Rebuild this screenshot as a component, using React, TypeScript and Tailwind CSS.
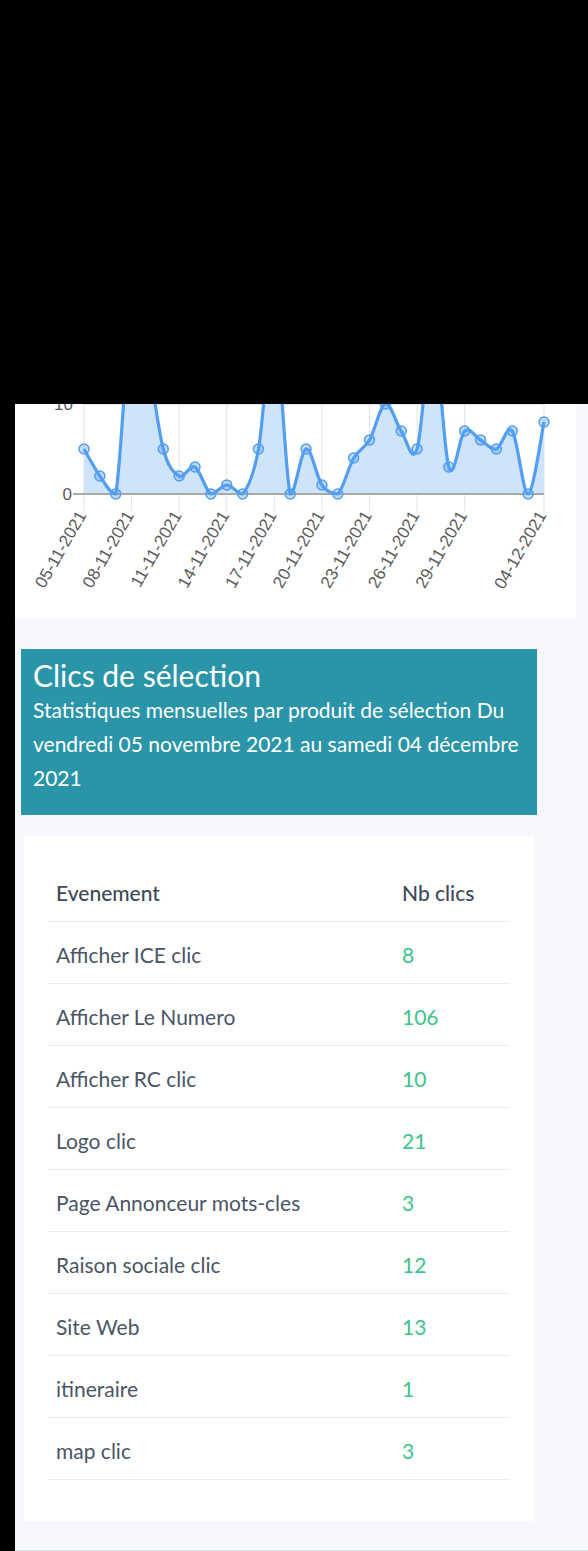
import React from "react";

// clicks per day, 05-11-2021 -> 04-12-2021
const chartData = [
  5, 2, 0, 20, 15, 5, 2, 3, 0, 1, 0, 5, 19, 0, 5, 1, 0, 4, 6, 10, 7, 5, 18, 3,
  7, 6, 5, 7, 0, 8,
];

const ticks = [
  { day: 0, label: "05-11-2021" },
  { day: 3, label: "08-11-2021" },
  { day: 6, label: "11-11-2021" },
  { day: 9, label: "14-11-2021" },
  { day: 12, label: "17-11-2021" },
  { day: 15, label: "20-11-2021" },
  { day: 18, label: "23-11-2021" },
  { day: 21, label: "26-11-2021" },
  { day: 24, label: "29-11-2021" },
  { day: 29, label: "04-12-2021" },
];

const events = [
  { name: "Afficher ICE clic", clicks: 8 },
  { name: "Afficher Le Numero", clicks: 106 },
  { name: "Afficher RC clic", clicks: 10 },
  { name: "Logo clic", clicks: 21 },
  { name: "Page Annonceur mots-cles", clicks: 3 },
  { name: "Raison sociale clic", clicks: 12 },
  { name: "Site Web", clicks: 13 },
  { name: "itineraire", clicks: 1 },
  { name: "map clic", clicks: 3 },
];

const X0 = 69;
const X1 = 529;
const BASE = 90;
const UNIT = 9;

const px = (i: number) => X0 + (i * (X1 - X0)) / (chartData.length - 1);
const py = (v: number) => BASE - v * UNIT;

function smoothPath(pts: [number, number][]) {
  let d = `M${pts[0][0]},${pts[0][1]}`;
  for (let i = 0; i < pts.length - 1; i++) {
    const p0 = pts[i - 1] ?? pts[i];
    const p1 = pts[i];
    const p2 = pts[i + 1];
    const p3 = pts[i + 2] ?? p2;
    const c1x = p1[0] + (p2[0] - p0[0]) / 6;
    // keep the curve from dipping under the zero line
    const c1y = Math.min(BASE, p1[1] + (p2[1] - p0[1]) / 6);
    const c2x = p2[0] - (p3[0] - p1[0]) / 6;
    const c2y = Math.min(BASE, p2[1] - (p3[1] - p1[1]) / 6);
    d += ` C${c1x.toFixed(1)},${c1y.toFixed(1)} ${c2x.toFixed(1)},${c2y.toFixed(1)} ${p2[0].toFixed(1)},${p2[1].toFixed(1)}`;
  }
  return d;
}

function ClicksChart() {
  const pts = chartData.map((v, i) => [px(i), py(v)] as [number, number]);
  const line = smoothPath(pts);
  const area = `${line} L${X1},${BASE} L${X0},${BASE} Z`;

  return (
    <svg width="561" height="214" viewBox="0 0 561 214">
      {ticks.map((t) => (
        <line
          key={t.day}
          x1={px(t.day)}
          x2={px(t.day)}
          y1={0}
          y2={107}
          stroke="#e2e2e2"
          strokeWidth="1"
        />
      ))}
      <line x1={X0} x2={X1} y1={0.5} y2={0.5} stroke="#e2e2e2" />
      <path d={area} fill="#cfe3fb" />
      <line x1={58} x2={X1} y1={BASE} y2={BASE} stroke="#a9a9a9" strokeWidth="2" />
      <path d={line} fill="none" stroke="#529ef2" strokeWidth="3.2" />
      {pts.map((p, i) => (
        <circle
          key={i}
          cx={p[0]}
          cy={p[1]}
          r="5"
          fill="rgba(82,158,242,0.35)"
          stroke="#529ef2"
          strokeWidth="1.5"
        />
      ))}
      <g fontFamily="'Liberation Sans', Arial, sans-serif" fontSize="17" fill="#5c5c5c">
        <text x={58} y={6} textAnchor="end">
          10
        </text>
        <text x={57} y={96} textAnchor="end">
          0
        </text>
        {ticks.map((t) => (
          <text
            key={t.label}
            x={px(t.day) + 3}
            y={111}
            textAnchor="end"
            transform={`rotate(-60 ${px(t.day) + 3} 111)`}
          >
            {t.label}
          </text>
        ))}
      </g>
    </svg>
  );
}

export default function App() {
  return (
    <div
      className="min-h-[1551px] bg-black"
      style={{ fontFamily: "Lato, 'Open Sans', sans-serif" }}
    >
      <div className="h-[404px]" />
      <div className="ml-[15px] bg-[#f6f8fd] pb-[29px] border-b border-[#dcdfe6]">
        <div className="w-[561px] h-[214px] overflow-hidden bg-white">
          <ClicksChart />
        </div>

        <div className="mt-[31px] ml-[6px] w-[516px] bg-[#2a95a9] px-3 pt-2 pb-5 text-white">
          <h2 className="text-[30px] leading-[36px]">Clics de sélection</h2>
          <p className="text-[21px] leading-[34px]">
            Statistiques mensuelles par produit de sélection Du vendredi 05
            novembre 2021 au samedi 04 décembre 2021
          </p>
        </div>

        <div className="mt-[21px] ml-[9px] w-[510px] bg-white px-6 pt-[29px] pb-[41px]">
          <table className="w-full border-collapse text-[21px]">
            <thead>
              <tr className="border-b border-[#e8ebef] text-[#3d4858]">
                <th className="h-[56px] w-[346px] px-2 text-left font-medium">
                  Evenement
                </th>
                <th className="h-[56px] px-2 text-left font-medium">Nb clics</th>
              </tr>
            </thead>
            <tbody>
              {events.map((e) => (
                <tr key={e.name} className="border-b border-[#e8ebef]">
                  <td className="h-[62px] px-2 pt-[6px] text-[#4a5566]">{e.name}</td>
                  <td className="h-[62px] px-2 pt-[6px] text-[#3cc48b]">{e.clicks}</td>
                </tr>
              ))}
            </tbody>
          </table>
        </div>
      </div>
    </div>
  );
}
